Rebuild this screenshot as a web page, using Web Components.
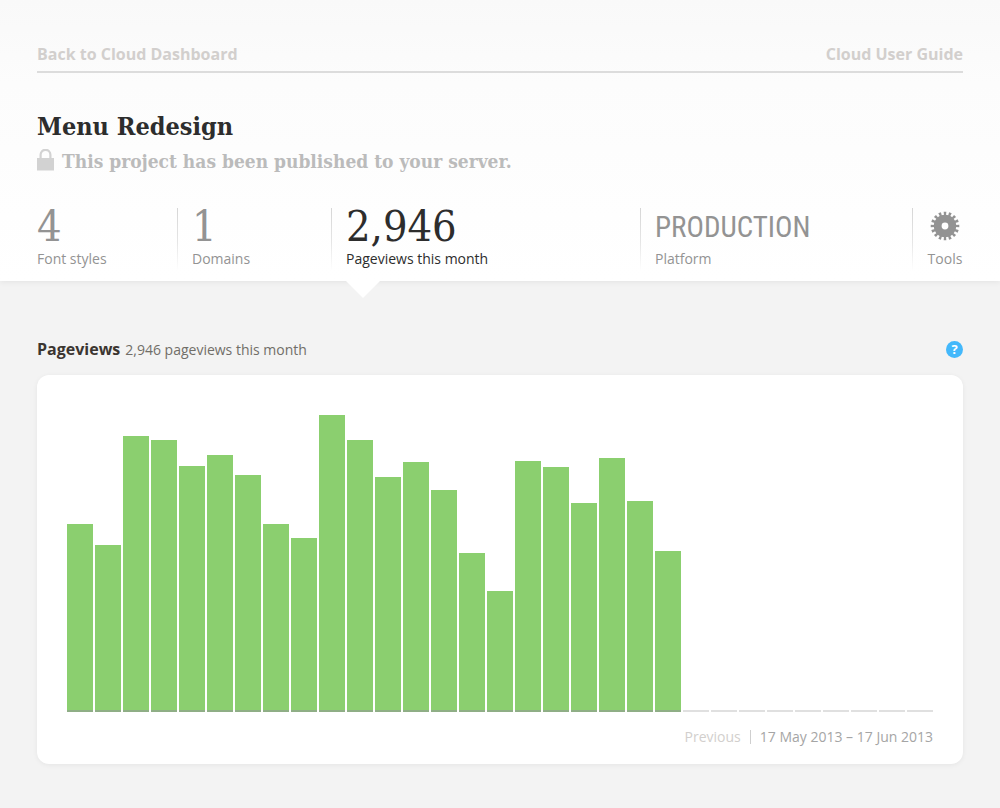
<!DOCTYPE html>
<html lang="en">
<head>
<meta charset="utf-8">
<meta name="viewport" content="width=device-width, initial-scale=1">
<title>Menu Redesign</title>
<style>
  html, body { margin: 0; min-height: 100%; }
  body {
    background: #f3f3f3;
    color: #2d2d2d;
    font-family: "Open Sans", "Noto Sans", sans-serif;
    font-size: 14px;
    line-height: 20px;
    --gutter: 37px;
    --serif: "DejaVu Serif Condensed", "DejaVu Serif", serif;
    --narrow: "Liberation Sans Narrow", "Roboto Condensed", "DejaVu Sans Condensed", sans-serif;
  }
</style>
</head>
<body>
<project-header>
  <top-nav slot="nav"></top-nav>
  <project-title slot="title" name="Menu Redesign">This project has been published to your server.</project-title>
  <stat-bar slot="stats">
    <stat-item label="Font styles">4</stat-item>
    <stat-item label="Domains">1</stat-item>
    <stat-item label="Pageviews this month" current>2,946</stat-item>
    <stat-item label="Platform" narrow>PRODUCTION</stat-item>
    <stat-item label="Tools" icon><gear-icon></gear-icon></stat-item>
  </stat-bar>
</project-header>
<pageviews-panel>
  <bar-chart values="188,167,276,272,246,257,237,188,174,297,272,235,250,222,159,121,251,245,209,254,211,161" days="31"></bar-chart>
  <date-range slot="footer">17 May 2013 – 17 Jun 2013</date-range>
</pageviews-panel>

<script>
const define = (name, html, setup) => customElements.define(name, class extends HTMLElement {
  connectedCallback() {
    if (this.shadowRoot) return;
    const root = this.attachShadow({ mode: "open" });
    root.innerHTML = html;
    if (setup) setup(this, root);
  }
});

define("project-header", `
  <style>
    :host { display: block; }
    header {
      display: flex; flex-direction: column;
      padding: 44px var(--gutter) 0;
      background: linear-gradient(#f9f9f9, #fcfcfc 30%, #fff);
      box-shadow: 0 1px 6px rgba(0,0,0,.07);
    }
    slot[name=title]::slotted(*) { margin-top: 36px; }
    slot[name=stats]::slotted(*) { margin-top: 31px; }
  </style>
  <header><slot name="nav"></slot><slot name="title"></slot><slot name="stats"></slot></header>`);

define("top-nav", `
  <style>
    :host { display: block; }
    nav { display: flex; justify-content: space-between; padding-bottom: 7px; border-bottom: 2px solid #dcdcdc; }
    a { color: #d2cfcd; font-size: 16px; font-weight: 700; line-height: 20px; text-decoration: none; }
  </style>
  <nav><a href="#dashboard">Back to Cloud Dashboard</a><a href="#guide">Cloud User Guide</a></nav>`);

define("project-title", `
  <style>
    :host { display: block; font-family: var(--serif); font-weight: 700; }
    h1 { margin: 0; font-size: 25px; line-height: 36px; }
    p { display: flex; align-items: center; gap: 8px; margin: 0; color: #bbb; font-size: 19px; line-height: 32px; }
    svg { flex: none; }
  </style>
  <h1></h1>
  <p><svg width="17" height="24" viewBox="0 0 17 24" aria-hidden="true">
    <path d="M3.600 9V5.700a4.900 4.900 0 0 1 9.800 0V9" fill="none" stroke="#d2d2d2" stroke-width="2.200"/>
    <path d="M0 9h17V21.500H0z" fill="#d2d2d2"/></svg><slot></slot></p>`,
  (el, root) => { root.querySelector("h1").textContent = el.getAttribute("name"); });

define("stat-bar", `
  <style>
    :host { display: block; }
    nav { display: grid; grid-template-columns: 140fr 154fr 309fr 272fr 51px; }
  </style>
  <nav aria-label="Project"><slot></slot></nav>`);

define("stat-item", `
  <style>
    :host {
      display: block; position: relative; height: 73px; color: #939393;
      padding-left: 15px;
      background: linear-gradient(#d6d6d6, #e6e6e6 50%, #fff 90%) left top / 1px 70px no-repeat;
    }
    :host(:first-child) { padding-left: 0; background: none; }
    :host([current]) { color: #2d2d2d; }
    :host([current])::after {
      content: ""; position: absolute; top: 100%; left: 15px;
      width: 34px; height: 17px; background: #fff;
      clip-path: polygon(0 0, 100% 0, 50% 100%);
    }
    a { display: flex; flex-direction: column; color: inherit; text-decoration: none; white-space: nowrap; }
    strong { height: 41px; font: 400 43px/36px var(--serif); }
    :host([narrow]) strong { font: 400 29px/38px var(--narrow); }
    :host([icon]) a { align-items: center; }
  </style>
  <a href="#"><strong><slot></slot></strong><span></span></a>`,
  (el, root) => { root.querySelector("span").textContent = el.getAttribute("label"); });

define("gear-icon", `
  <style>:host { display: block; } svg { display: block; margin-top: 3px; }</style>
  <svg width="30" height="30" viewBox="-15 -15 30 30" fill="none" stroke="#939393" aria-hidden="true">
    <circle r="7.300" stroke-width="7.800"/>
    <circle r="12.400" stroke-width="3.800" pathLength="32" stroke-dasharray="1 1" stroke-dashoffset=".5" transform="rotate(-90)"/>
  </svg>`);

define("pageviews-panel", `
  <style>
    :host { display: block; padding: 56px var(--gutter) 44px; }
    .head { display: flex; align-items: center; justify-content: space-between; height: 24px; color: #716e68; }
    .head div { display: flex; align-items: baseline; gap: 5px; }
    h2 { margin: 0; font-size: 16px; line-height: 24px; color: #3b3530; }
    p { margin: 0; }
    button { width: 17px; height: 17px; padding: 0; border: 0; border-radius: 50%; background: #43b8fb; color: #fff; font: 700 13px/17px "Open Sans", sans-serif; }
    section { margin-top: 14px; padding: 30px 30px 17px; border-radius: 12px; background: #fff; box-shadow: 0 1px 5px rgba(0,0,0,.06); }
  </style>
  <div class="head"><div><h2>Pageviews</h2><p>2,946 pageviews this month</p></div><button type="button" aria-label="Help">?</button></div>
  <section><slot></slot><slot name="footer"></slot></section>`);

define("bar-chart", `
  <style>
    :host { display: block; }
    div { display: grid; grid-auto-flow: column; grid-auto-columns: 1fr; gap: 2px; align-items: end; height: 307px; }
    i { box-sizing: border-box; min-height: 2px; border-bottom: 2px solid #e0e0e0; }
    i.on { background: #8bcf6f; border-bottom-color: #8fae86; }
  </style>
  <div role="img" aria-label="Pageviews per day"></div>`,
  (el, root) => {
    const values = el.getAttribute("values").split(",");
    const chart = root.querySelector("div");
    for (let d = 0; d < Number(el.getAttribute("days")); d++) {
      const bar = document.createElement("i");
      if (values[d]) { bar.className = "on"; bar.style.height = values[d] + "px"; }
      chart.append(bar);
    }
  });

define("date-range", `
  <style>
    :host { display: flex; justify-content: flex-end; align-items: center; margin-top: 15px; color: #a5a5a5; }
    a { color: #d2cfcd; text-decoration: none; padding-right: 9px; margin-right: 9px; line-height: 14px; border-right: 1px solid #cfcfcf; }
  </style>
  <a href="#previous">Previous</a><span><slot></slot></span>`);
</script>
</body>
</html>
